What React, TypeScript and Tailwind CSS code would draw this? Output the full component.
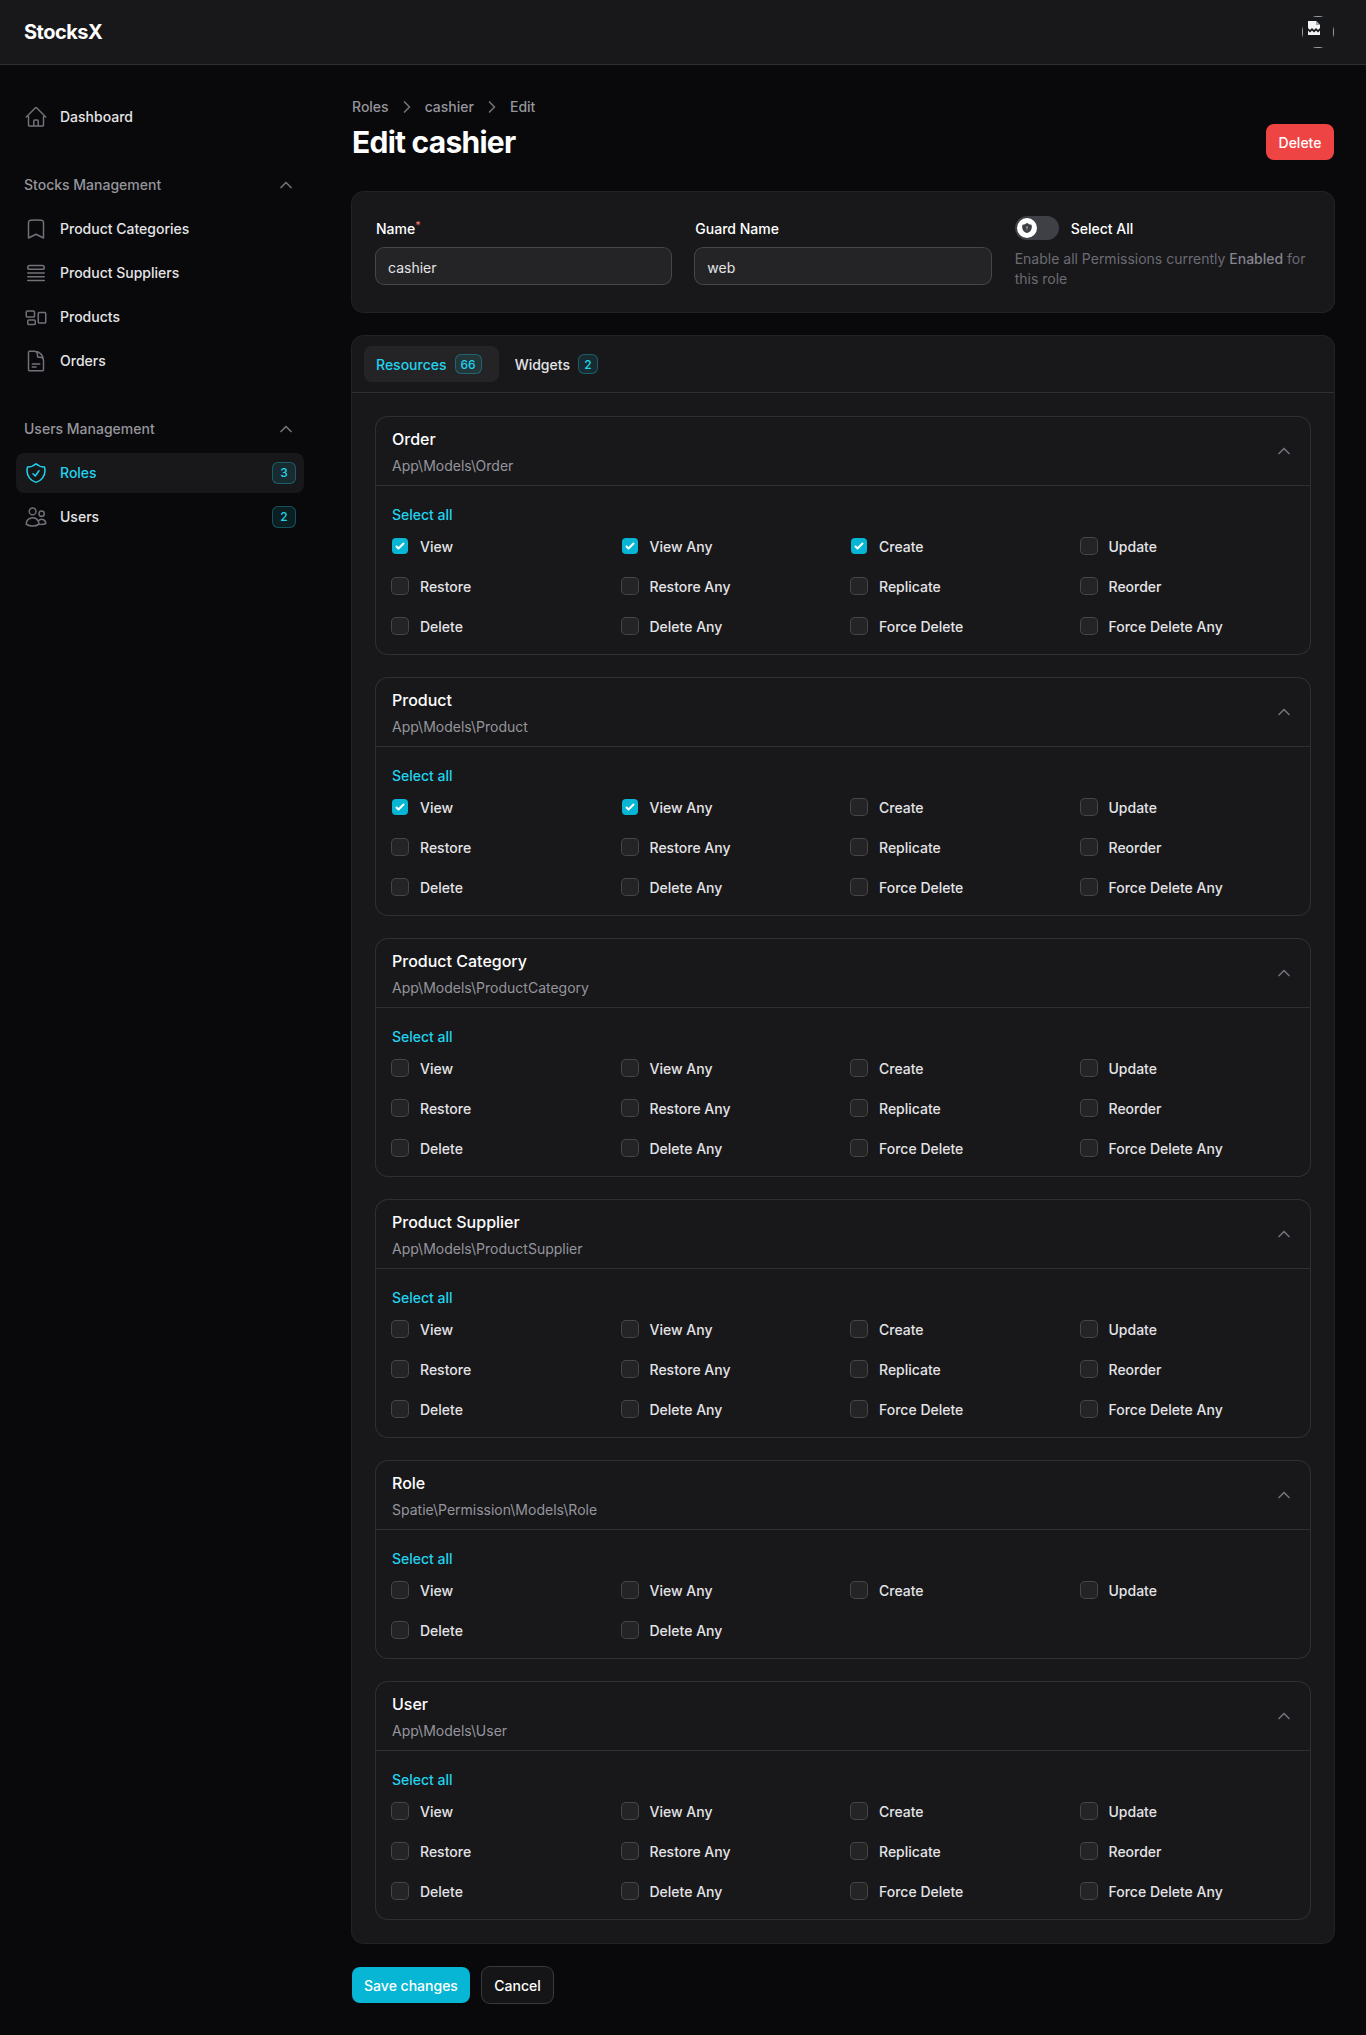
import { HiOutlineHome, HiOutlineBookmark, HiOutlineQueueList, HiOutlineRectangleGroup, HiOutlineDocumentText, HiOutlineShieldCheck, HiOutlineUsers, HiShieldExclamation } from "react-icons/hi2";
import { LuChevronUp, LuChevronRight } from "react-icons/lu";
import type { ReactNode } from "react";

const ALL = ["View", "View Any", "Create", "Update", "Restore", "Restore Any", "Replicate", "Reorder", "Delete", "Delete Any", "Force Delete", "Force Delete Any"];

const SECTIONS = [
  { title: "Order", sub: "App\\Models\\Order", perms: ALL, on: ["View", "View Any", "Create"] },
  { title: "Product", sub: "App\\Models\\Product", perms: ALL, on: ["View", "View Any"] },
  { title: "Product Category", sub: "App\\Models\\ProductCategory", perms: ALL, on: [] },
  { title: "Product Supplier", sub: "App\\Models\\ProductSupplier", perms: ALL, on: [] },
  { title: "Role", sub: "Spatie\\Permission\\Models\\Role", perms: ["View", "View Any", "Create", "Update", "Delete", "Delete Any"], on: [] },
  { title: "User", sub: "App\\Models\\User", perms: ALL, on: [] },
];

function Checkbox({ checked }: { checked: boolean }) {
  if (checked) {
    return (
      <span className="flex h-4 w-4 shrink-0 items-center justify-center rounded bg-[#06b6d4]">
        <svg viewBox="0 0 16 16" className="h-4 w-4" fill="#fff">
          <path d="M12.207 4.793a1 1 0 010 1.414l-5 5a1 1 0 01-1.414 0l-2-2a1 1 0 011.414-1.414L6.5 9.086l4.293-4.293a1 1 0 011.414 0z" />
        </svg>
      </span>
    );
  }
  return <span className="h-4 w-4 shrink-0 rounded bg-white/5 ring-1 ring-white/20" />;
}

function Section({ title, sub, perms, on }: { title: string; sub: string; perms: string[]; on: string[] }) {
  return (
    <section className="rounded-xl ring-1 ring-white/10">
      <header className="flex items-center justify-between px-4 py-2.5">
        <div>
          <h3 className="text-base leading-6 font-[550] text-white">{title}</h3>
          <p className="mt-1 h-5 pt-px text-sm leading-5 text-[#95959c]">{sub}</p>
        </div>
        <LuChevronUp className="h-5 w-5 text-[#71717a]" />
      </header>
      <div className="border-t border-white/10 px-4 pt-4 pb-[18px]">
        <div className="flex h-6 items-center pt-0.5 text-sm leading-5 font-[550] text-[#22d3ee]">Select all</div>
        <div className="mt-2.5 grid grid-cols-4 gap-x-4 gap-y-5">
          {perms.map((p) => (
            <label key={p} className="flex h-5 items-center gap-3 text-sm leading-5 font-[450] text-[#e4e4e7]">
              <Checkbox checked={on.includes(p)} />
              <span className="pt-0.5">{p}</span>
            </label>
          ))}
        </div>
      </div>
    </section>
  );
}

function NavItem({ icon, label, active, badge }: { icon: ReactNode; label: string; active?: boolean; badge?: string }) {
  return (
    <a className={`flex h-10 items-center gap-3 rounded-lg px-2 text-sm font-[450] ${active ? "bg-[#18181b] text-[#22d3ee]" : "text-[#e4e4e7]"}`}>
      <span className={`text-2xl ${active ? "text-[#22d3ee]" : "text-[#71717a]"}`}>{icon}</span>
      <span className="flex-1">{label}</span>
      {badge && (
        <span className="flex h-[22px] w-6 items-center justify-center rounded-md bg-[#22d3ee]/10 text-xs font-medium text-[#22d3ee] ring-1 ring-inset ring-[#22d3ee]/30">
          {badge}
        </span>
      )}
    </a>
  );
}

function GroupLabel({ children }: { children: ReactNode }) {
  return (
    <div className="flex h-6 items-center justify-between px-2 text-sm font-[450] text-[#95959c]">
      <span>{children}</span>
      <LuChevronUp className="h-5 w-5 text-[#71717a]" />
    </div>
  );
}

export default function App() {
  return (
    <div className="min-h-screen bg-[#09090b] font-['Inter',sans-serif] text-white antialiased">
      <header className="flex h-[65px] items-center justify-between border-b border-white/10 bg-[#18181b] pr-8 pl-6">
        <span className="text-xl leading-5 font-bold tracking-tight text-white">StocksX</span>
        <div className="relative h-8 w-8 overflow-hidden rounded-full">
          <div className="h-full w-full border border-[#9ca3af]" />
          <svg viewBox="0 0 12 14" className="absolute top-[5px] left-[6px] h-3.5 w-3" fill="#f3f4f6">
            <path d="M0 0H8L12 4V7L10 9L8 7L6 9L4 7L2 9L0 7Z" />
            <path d="M0 9.5L2 11.5L4 9.5L6 11.5L8 9.5L10 11.5L12 9.5V14H0Z" />
            <path d="M8 0V4H12Z" fill="#9ca3af" />
          </svg>
        </div>
      </header>
      <div className="flex">
        <aside className="w-80 shrink-0 px-4 pt-8">
          <NavItem icon={<HiOutlineHome />} label="Dashboard" />
          <div className="mt-9">
            <GroupLabel>Stocks Management</GroupLabel>
            <div className="mt-3 flex flex-col gap-1">
              <NavItem icon={<HiOutlineBookmark />} label="Product Categories" />
              <NavItem icon={<HiOutlineQueueList />} label="Product Suppliers" />
              <NavItem icon={<HiOutlineRectangleGroup />} label="Products" />
              <NavItem icon={<HiOutlineDocumentText />} label="Orders" />
            </div>
          </div>
          <div className="mt-9">
            <GroupLabel>Users Management</GroupLabel>
            <div className="mt-3 flex flex-col gap-1">
              <NavItem icon={<HiOutlineShieldCheck />} label="Roles" active badge="3" />
              <NavItem icon={<HiOutlineUsers />} label="Users" badge="2" />
            </div>
          </div>
        </aside>
        <main className="min-w-0 flex-1 px-8 pt-8 pb-8">
          <nav className="flex h-5 items-center gap-2 text-sm font-[450] text-[#95959c]">
            <span>Roles</span>
            <LuChevronRight className="h-5 w-5 text-[#71717a]" />
            <span>cashier</span>
            <LuChevronRight className="h-5 w-5 text-[#71717a]" />
            <span>Edit</span>
          </nav>
          <div className="mt-[7px] flex items-center justify-between">
            <h1 className="text-3xl leading-9 font-bold tracking-tight text-white">Edit cashier</h1>
            <button className="flex h-9 w-[68px] items-center justify-center rounded-lg bg-[#ef4444] pt-0.5 text-sm font-[550] text-white">Delete</button>
          </div>
          <div className="mt-8 grid grid-cols-3 gap-6 rounded-xl bg-[#18181b] p-6 ring-1 ring-white/10">
            <div>
              <div className="h-6 pt-px text-sm leading-6 font-[450] text-white">
                Name<sup className="font-medium text-[#f87171]">*</sup>
              </div>
              <div className="mt-2 flex h-9 items-center rounded-lg bg-white/5 px-3 pt-1 text-sm text-[#e4e4e7] ring-1 ring-white/20">cashier</div>
            </div>
            <div>
              <div className="h-6 pt-px text-sm leading-6 font-[450] text-white">Guard Name</div>
              <div className="mt-2 flex h-9 items-center rounded-lg bg-white/5 px-3 pt-1 text-sm text-[#e4e4e7] ring-1 ring-white/20">web</div>
            </div>
            <div>
              <div className="flex items-center gap-3">
                <span className="flex h-6 w-11 items-center rounded-full bg-[#3f3f46] p-0.5">
                  <span className="flex h-5 w-5 items-center justify-center rounded-full bg-white">
                    <HiShieldExclamation className="h-3 w-3 text-[#3f3f46]" />
                  </span>
                </span>
                <span className="h-6 pt-px text-sm leading-6 font-[450] text-white">Select All</span>
              </div>
              <p className="mt-2 h-10 pt-px text-sm leading-5 text-[#6b6b72]">
                Enable all Permissions currently <span className="font-medium text-[#85858c]">Enabled</span> for this role
              </p>
            </div>
          </div>
          <div className="mt-6 rounded-xl bg-[#18181b] ring-1 ring-white/10">
            <div className="flex gap-1 border-b border-white/10 px-3 py-2.5">
              <div className="flex h-9 items-center gap-2 rounded-lg bg-white/5 pr-[17px] pl-3 text-sm font-[450] text-[#22d3ee]">
                <span className="pt-0.5">Resources</span>
                <span className="flex h-5 items-center rounded-md bg-[#22d3ee]/10 px-1.5 pt-0.5 text-xs font-medium text-[#22d3ee] ring-1 ring-inset ring-[#22d3ee]/30">66</span>
              </div>
              <div className="flex h-9 items-center gap-2 rounded-lg px-3 text-sm font-[450] text-[#e4e4e7]">
                <span className="pt-0.5">Widgets</span>
                <span className="flex h-5 w-5 items-center justify-center rounded-md bg-[#22d3ee]/10 pt-0.5 text-xs font-medium text-[#22d3ee] ring-1 ring-inset ring-[#22d3ee]/30">2</span>
              </div>
            </div>
            <div className="flex flex-col gap-6 p-6">
              {SECTIONS.map((s) => (
                <Section key={s.title} {...s} />
              ))}
            </div>
          </div>
          <div className="mt-6 flex gap-3">
            <button className="flex h-9 w-[118px] items-center justify-center rounded-lg bg-[#06b6d4] pt-0.5 text-sm font-[550] text-white">Save changes</button>
            <button className="flex h-9 w-[71px] items-center justify-center rounded-lg bg-white/5 pt-0.5 text-sm font-[550] text-white ring-1 ring-white/20">Cancel</button>
          </div>
        </main>
      </div>
    </div>
  );
}
